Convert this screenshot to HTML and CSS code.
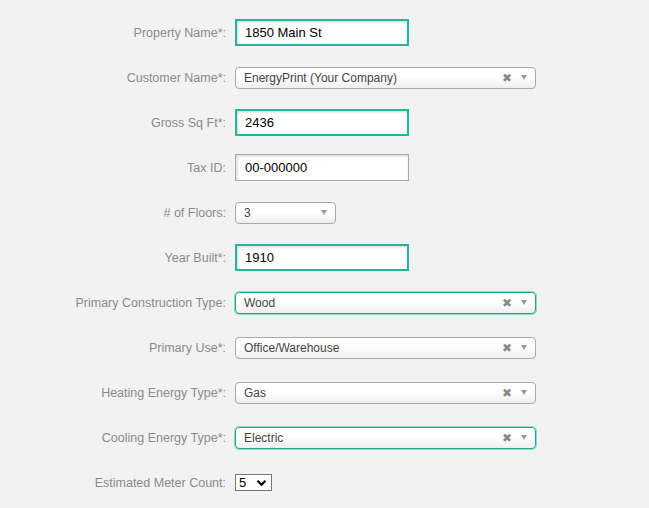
FILE: index.html
```html
<!DOCTYPE html>
<html>
<head>
<meta charset="utf-8">
<link rel="stylesheet" href="styles.css">
</head>
<body>
<form class="form">
  <div class="row">
    <label class="lbl">Property Name*:</label>
    <input class="txt req" type="text" value="1850 Main St">
  </div>
  <div class="row">
    <label class="lbl">Customer Name*:</label>
    <div class="s2 wide"><span class="s2-val">EnergyPrint (Your Company)</span><span class="s2-x">✖</span><span class="s2-arr"></span></div>
  </div>
  <div class="row">
    <label class="lbl">Gross Sq Ft*:</label>
    <input class="txt req" type="text" value="2436">
  </div>
  <div class="row">
    <label class="lbl">Tax ID:</label>
    <input class="txt" type="text" value="00-000000">
  </div>
  <div class="row">
    <label class="lbl"># of Floors:</label>
    <div class="s2 narrow"><span class="s2-val">3</span><span class="s2-arr"></span></div>
  </div>
  <div class="row">
    <label class="lbl">Year Built*:</label>
    <input class="txt req" type="text" value="1910">
  </div>
  <div class="row">
    <label class="lbl">Primary Construction Type:</label>
    <div class="s2 wide focus"><span class="s2-val">Wood</span><span class="s2-x">✖</span><span class="s2-arr"></span></div>
  </div>
  <div class="row">
    <label class="lbl">Primary Use*:</label>
    <div class="s2 wide"><span class="s2-val">Office/Warehouse</span><span class="s2-x">✖</span><span class="s2-arr"></span></div>
  </div>
  <div class="row">
    <label class="lbl">Heating Energy Type*:</label>
    <div class="s2 wide"><span class="s2-val">Gas</span><span class="s2-x">✖</span><span class="s2-arr"></span></div>
  </div>
  <div class="row">
    <label class="lbl">Cooling Energy Type*:</label>
    <div class="s2 wide focus"><span class="s2-val">Electric</span><span class="s2-x">✖</span><span class="s2-arr"></span></div>
  </div>
  <div class="row">
    <label class="lbl">Estimated Meter Count:</label>
    <div class="native"><span class="native-val">5</span><svg class="chev" width="11" height="8" viewBox="0 0 11 8"><path d="M1.5 1.8 L5.5 5.8 L9.5 1.8" fill="none" stroke="#000" stroke-width="2.2"/></svg></div>
  </div>
</form>
</body>
</html>
```
FILE: styles.css
```css
html, body {
  margin: 0;
  padding: 0;
  background: #f2f2f2;
}
body {
  font-family: "Liberation Sans", Arial, sans-serif;
  width: 649px;
  height: 508px;
  overflow: hidden;
}
.form {
  padding-top: 10px;
  display: flex;
  flex-direction: column;
}
.row {
  height: 45px;
  display: flex;
  align-items: center;
}
.lbl {
  width: 235px;
  text-align: right;
  color: #8a8a8a;
  font-size: 12.5px;
  padding-right: 9px;
  box-sizing: border-box;
}
.txt {
  box-sizing: border-box;
  width: 174px;
  height: 27px;
  margin: 0;
  border: 1px solid #a9a9a9;
  background: #fff;
  box-shadow: inset 1px 1px 3px rgba(0,0,0,0.18);
  font-family: "Liberation Sans", Arial, sans-serif;
  font-size: 13px;
  color: #000;
  padding: 0 0 0 9px;
  outline: none;
}
.txt.req {
  border: 2px solid #1fb89a;
  padding-left: 8px;
}
.s2 {
  box-sizing: border-box;
  height: 22px;
  border: 1px solid #aaa;
  border-radius: 4px;
  background: linear-gradient(to bottom, #ffffff 0%, #ffffff 45%, #eeeeee 100%);
  display: flex;
  align-items: center;
  padding-left: 8px;
  font-size: 12px;
  color: #444;
  position: relative;
}
.s2.wide { width: 301px; }
.s2.narrow { width: 101px; }
.s2.focus {
  border: 1px solid #1fa98a;
  box-shadow: 0 0 0 1px rgba(31,184,154,0.45);
}
.s2-val {
  flex: 1;
  white-space: nowrap;
}
.s2-x {
  font-size: 12px;
  color: #888;
  font-family: "DejaVu Sans", sans-serif;
  margin-right: 9px;
}
.s2-arr {
  width: 0;
  height: 0;
  border-left: 3.5px solid transparent;
  border-right: 3.5px solid transparent;
  border-top: 5px solid #999;
  margin-right: 8px;
}
.native {
  box-sizing: border-box;
  width: 37px;
  height: 17px;
  border: 1px solid #767676;
  background: #fff;
  display: flex;
  align-items: center;
  padding-left: 3px;
  font-size: 13px;
  color: #000;
}
.native-val { flex: 1; }
.chev { margin-right: 4px; }
```
